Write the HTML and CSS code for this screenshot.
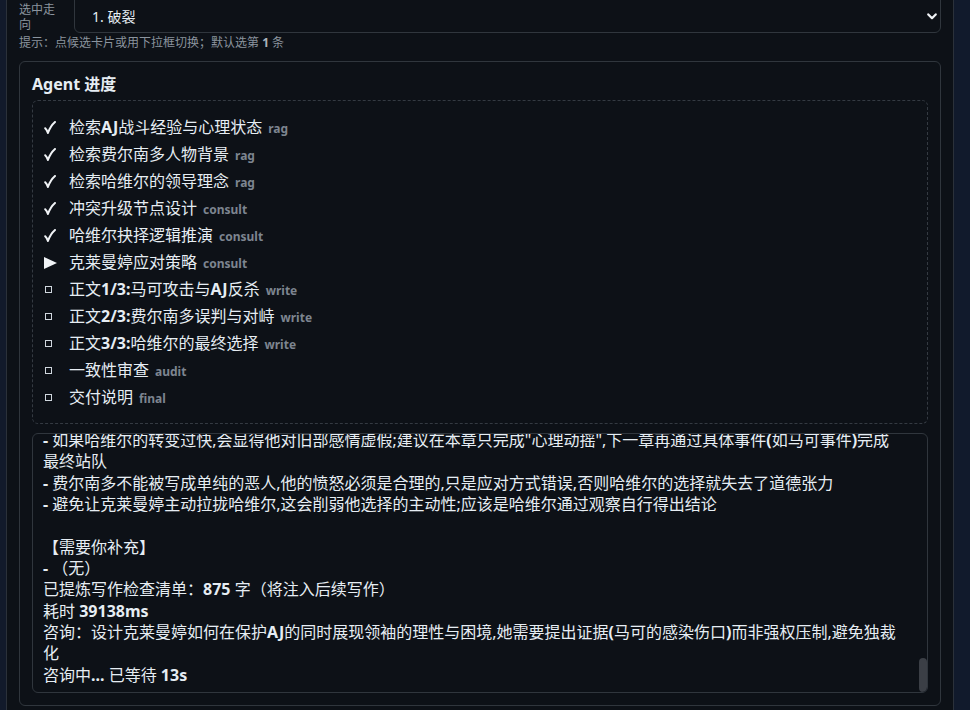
FILE: index.html
```html
<!DOCTYPE html>
<html lang="zh-CN">
<head>
<meta charset="utf-8">
<title>Agent 进度</title>
<link rel="stylesheet" href="styles.css">
</head>
<body>
<div class="rail-left"></div>
<main class="main">
  <div class="pick-row">
    <label class="pick-label" for="route">选中走向</label>
    <div class="select-wrap">
      <select id="route" class="select">
        <option>1. 破裂</option>
        <option>2. 妥协</option>
        <option>3. 分裂</option>
      </select>
      <svg class="chev" width="10" height="7" viewBox="0 0 10 7"><path d="M1.3 1.4 L5 5.2 L8.7 1.4" fill="none" stroke="#f0f3f6" stroke-width="2.2" stroke-linecap="round" stroke-linejoin="round"/></svg>
    </div>
  </div>
  <div class="hint">提示：点候选卡片或用下拉框切换；默认选第 <b>1</b> 条</div>

  <section class="card">
    <h2 class="card-title">Agent 进度</h2>
    <ul class="steps">
      <li class="step"><span class="ico"><svg width="12" height="13" viewBox="0 0 12 13"><path d="M1.2 7.2 C2.3 8.3 3.2 9.8 3.9 12 C5.5 7.6 7.7 3.9 11 1" fill="none" stroke="#f0f3f6" stroke-width="2" stroke-linecap="round" stroke-linejoin="round"/></svg></span><span class="txt">检索<b>AJ</b>战斗经验与心理状态<span class="tag">rag</span></span></li>
      <li class="step"><span class="ico"><svg width="12" height="13" viewBox="0 0 12 13"><path d="M1.2 7.2 C2.3 8.3 3.2 9.8 3.9 12 C5.5 7.6 7.7 3.9 11 1" fill="none" stroke="#f0f3f6" stroke-width="2" stroke-linecap="round" stroke-linejoin="round"/></svg></span><span class="txt">检索费尔南多人物背景<span class="tag">rag</span></span></li>
      <li class="step"><span class="ico"><svg width="12" height="13" viewBox="0 0 12 13"><path d="M1.2 7.2 C2.3 8.3 3.2 9.8 3.9 12 C5.5 7.6 7.7 3.9 11 1" fill="none" stroke="#f0f3f6" stroke-width="2" stroke-linecap="round" stroke-linejoin="round"/></svg></span><span class="txt">检索哈维尔的领导理念<span class="tag">rag</span></span></li>
      <li class="step"><span class="ico"><svg width="12" height="13" viewBox="0 0 12 13"><path d="M1.2 7.2 C2.3 8.3 3.2 9.8 3.9 12 C5.5 7.6 7.7 3.9 11 1" fill="none" stroke="#f0f3f6" stroke-width="2" stroke-linecap="round" stroke-linejoin="round"/></svg></span><span class="txt">冲突升级节点设计<span class="tag">consult</span></span></li>
      <li class="step"><span class="ico"><svg width="12" height="13" viewBox="0 0 12 13"><path d="M1.2 7.2 C2.3 8.3 3.2 9.8 3.9 12 C5.5 7.6 7.7 3.9 11 1" fill="none" stroke="#f0f3f6" stroke-width="2" stroke-linecap="round" stroke-linejoin="round"/></svg></span><span class="txt">哈维尔抉择逻辑推演<span class="tag">consult</span></span></li>
      <li class="step"><span class="ico"><svg width="13" height="12" viewBox="0 0 13 12"><polygon points="0,0 13,6 0,12" fill="#f0f3f6"/></svg></span><span class="txt">克莱曼婷应对策略<span class="tag">consult</span></span></li>
      <li class="step"><span class="ico"><span class="box"></span></span><span class="txt">正文<b>1/3:</b>马可攻击与<b>AJ</b>反杀<span class="tag">write</span></span></li>
      <li class="step"><span class="ico"><span class="box"></span></span><span class="txt">正文<b>2/3:</b>费尔南多误判与对峙<span class="tag">write</span></span></li>
      <li class="step"><span class="ico"><span class="box"></span></span><span class="txt">正文<b>3/3:</b>哈维尔的最终选择<span class="tag">write</span></span></li>
      <li class="step"><span class="ico"><span class="box"></span></span><span class="txt">一致性审查<span class="tag">audit</span></span></li>
      <li class="step"><span class="ico"><span class="box"></span></span><span class="txt">交付说明<span class="tag">final</span></span></li>
    </ul>

    <div class="log">
      <div class="log-scroll">
<div class="log-body">咨询：哈维尔抉择逻辑推演,他需要在旧部与克莱曼婷之间做出选择,但不能显得冷酷或软弱
【建议】
- 让哈维尔先尝试调和双方,在调和失败之后再表态,体现他一贯的领导方式
【风险】
<b>-</b> 如果哈维尔的转变过快,会显得他对旧部感情虚假;建议在本章只完成"心理动摇",下一章再通过具体事件<b>(</b>如马可事件<b>)</b>完成最终站队
<b>-</b> 费尔南多不能被写成单纯的恶人,他的愤怒必须是合理的,只是应对方式错误,否则哈维尔的选择就失去了道德张力
<b>-</b> 避免让克莱曼婷主动拉拢哈维尔,这会削弱他选择的主动性;应该是哈维尔通过观察自行得出结论

【需要你补充】
<b>-</b> （无）
已提炼写作检查清单：<b>875</b> 字（将注入后续写作）
耗时 <b>39138ms</b>
咨询：设计克莱曼婷如何在保护<b>AJ</b>的同时展现领袖的理性与困境,她需要提出证据<b>(</b>马可的感染伤口<b>)</b>而非强权压制,避免独裁化
咨询中<b>...</b> 已等待 <b>13s</b></div>
      </div>
      <div class="log-track"><div class="log-thumb"></div></div>
    </div>
  </section>
</main>
<div class="rail-right"></div>
</body>
</html>
```

FILE: styles.css
```css
html, body {
  margin: 0;
  padding: 0;
}

body {
  display: flex;
  height: 710px;
  overflow: hidden;
  background: #0d1117;
  color: #e6edf3;
  font-family: "Noto Sans", "Noto Sans CJK SC", sans-serif;
}

.rail-left {
  width: 6px;
  flex: none;
  background: #121a2b;
  border-right: 1px solid #2b313a;
}

.rail-right {
  width: 16px;
  flex: none;
  background: #111a2c;
  border-left: 1px solid #2b313a;
}

.main {
  flex: 1;
  min-width: 0;
  padding: 0 12px;
  overflow: hidden;
}

.pick-row {
  display: flex;
  align-items: flex-start;
  gap: 12px;
  margin-top: -6px;
}

.pick-label {
  width: 43px;
  flex: none;
  padding-top: 8px;
  font-size: 12px;
  line-height: 15px;
  color: #8b949e;
}

.select-wrap {
  flex: 1;
  position: relative;
}

.select {
  display: block;
  width: 100%;
  height: 39px;
  box-sizing: border-box;
  margin: 0;
  padding: 5px 17px 0;
  appearance: none;
  -webkit-appearance: none;
  background: #0d1117;
  color: #e6edf3;
  border: 1px solid #30363d;
  border-radius: 6px;
  font-family: "Noto Sans", "Noto Sans CJK SC", sans-serif;
  font-size: 14px;
  outline: none;
}

.chev {
  position: absolute;
  right: 4px;
  top: 19px;
  pointer-events: none;
}

.hint {
  margin-top: 2px;
  font-size: 12px;
  line-height: 16px;
  color: #8b949e;
}

.hint b {
  color: #aab3bd;
}

.card {
  margin-top: 10px;
  border: 1px solid #30363d;
  border-radius: 6px;
  padding: 11px 12px 12px;
}

.card-title {
  margin: 0 0 5px;
  font-size: 16px;
  line-height: 22px;
  font-weight: 700;
  color: #e6edf3;
}

.steps {
  list-style: none;
  margin: 0;
  padding: 13px 10px 12px;
  border: 1px dashed #343a42;
  border-radius: 6px;
}

.step {
  display: flex;
  align-items: center;
  height: 27px;
}

.ico {
  width: 26px;
  flex: none;
  display: flex;
  align-items: center;
  padding-left: 1px;
  box-sizing: border-box;
}

.box {
  display: block;
  width: 5px;
  height: 5px;
  margin-left: 1px;
  border: 1px solid #d0d7de;
}

.txt {
  font-size: 16px;
  line-height: 27px;
  white-space: nowrap;
}

.tag {
  margin-left: 6px;
  font-size: 12px;
  font-weight: 700;
  color: #7d8590;
}

.log {
  margin-top: 9px;
  height: 260px;
  box-sizing: border-box;
  border: 1px solid #30363d;
  border-radius: 6px;
  display: flex;
  overflow: hidden;
}

.log-scroll {
  flex: 1;
  min-width: 0;
  overflow: hidden;
  display: flex;
  flex-direction: column-reverse;
}

.log-body {
  padding: 0 18px 6px 10px;
  white-space: pre-wrap;
  font-size: 16px;
  line-height: 21.33px;
  color: #e6edf3;
}

.log-track {
  width: 8px;
  flex: none;
  display: flex;
  flex-direction: column;
  justify-content: flex-end;
}

.log-thumb {
  height: 34px;
  background: #3b3f46;
  border-radius: 4px;
}
```
